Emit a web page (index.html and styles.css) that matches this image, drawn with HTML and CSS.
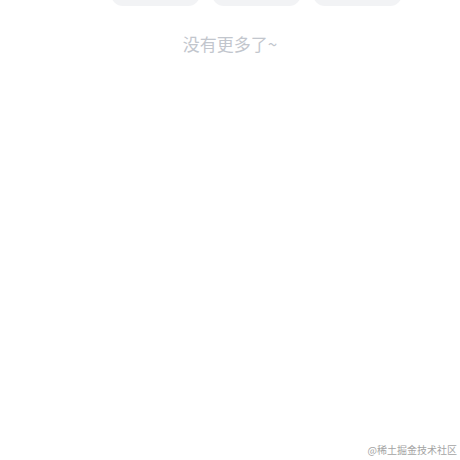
FILE: index.html
```html
<!DOCTYPE html>
<html lang="zh-CN">
<head>
<meta charset="utf-8">
<link rel="stylesheet" href="styles.css">
</head>
<body>
<div class="page">
  <div class="tabs">
    <div class="pill"></div>
    <div class="pill"></div>
    <div class="pill"></div>
  </div>
  <div class="nomore">没有更多了~</div>
</div>
<div class="watermark">@稀土掘金技术社区</div>
</body>
</html>
```
FILE: styles.css
```css
html, body {
  margin: 0;
  padding: 0;
  background: #ffffff;
  width: 460px;
  height: 460px;
  overflow: hidden;
  font-family: "Noto Sans CJK SC", "Noto Sans", sans-serif;
}
.page {
  display: flex;
  flex-direction: column;
}
.tabs {
  display: flex;
  gap: 12px;
  padding-left: 111px;
  margin-top: -26px;
}
.pill {
  width: 89px;
  height: 32px;
  border-radius: 12px;
  background: #f2f3f5;
}
.nomore {
  margin-top: 25px;
  text-align: center;
  font-size: 17px;
  line-height: 26px;
  color: #c2c6cd;
}
.watermark {
  position: absolute;
  right: 3px;
  bottom: 4px;
  font-size: 10px;
  line-height: 12px;
  color: #a4a4a4;
  font-family: "Noto Sans CJK SC", serif;
}
```
